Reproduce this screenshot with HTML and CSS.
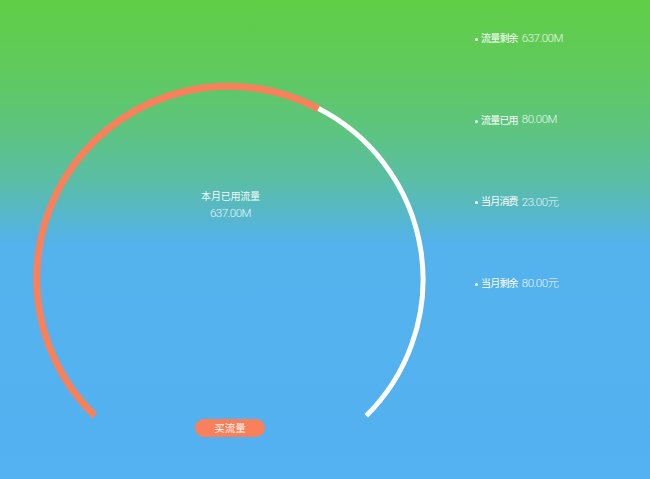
FILE: index.html
```html
<!DOCTYPE html>
<html lang="zh">
<head>
<meta charset="utf-8">
<link rel="stylesheet" href="styles.css">
</head>
<body>
<div class="page">
  <div class="gauge">
    <svg class="gauge-svg" width="460" height="479" viewBox="0 0 460 479">
      <path d="M94.7 415.8 A192 192 0 0 1 318.5 108.6" fill="none" stroke="#f8815c" stroke-width="7"/>
      <path d="M318.5 108.6 A192 192 0 0 1 366.3 415.8" fill="none" stroke="#ffffff" stroke-width="5"/>
    </svg>
    <div class="gauge-text">
      <div class="gauge-title">本月已用流量</div>
      <div class="gauge-value num">637.00M</div>
    </div>
    <div class="buy-btn">买流量</div>
  </div>
  <ul class="stats">
    <li class="stat"><span class="dot"></span><span class="label">流量剩余</span><span class="num">637.00M</span></li>
    <li class="stat"><span class="dot"></span><span class="label">流量已用</span><span class="num">80.00M</span></li>
    <li class="stat"><span class="dot"></span><span class="label">当月消费</span><span class="num">23.00元</span></li>
    <li class="stat"><span class="dot"></span><span class="label">当月剩余</span><span class="num">80.00元</span></li>
  </ul>
</div>
</body>
</html>
```

FILE: styles.css
```css
html, body {
  margin: 0;
  padding: 0;
}
body {
  width: 650px;
  height: 479px;
  overflow: hidden;
  font-family: "Noto Sans CJK SC", "Liberation Sans", sans-serif;
  color: #ffffff;
  background: linear-gradient(to bottom, #61ce46 0%, #60ca5c 14%, #5dc57c 26%, #5abea2 37%, #57b8c6 44%, #54b2ec 51%, #54b1f2 100%);
}
.page {
  display: flex;
  width: 650px;
  height: 479px;
}
.gauge {
  position: relative;
  width: 460px;
  height: 479px;
  flex: none;
}
.gauge-svg {
  display: block;
}
.gauge-text {
  position: absolute;
  left: 130px;
  top: 187px;
  width: 201px;
  text-align: center;
  color: rgba(255,255,255,0.95);
}
.gauge-title {
  font-size: 10px;
  line-height: 17px;
  letter-spacing: -0.2px;
}
.gauge-value {
  line-height: 19px;
}
.num {
  font-family: Roboto, "Noto Sans CJK SC", sans-serif;
  font-weight: 300;
  font-size: 11.5px;
  letter-spacing: -0.5px;
  font-variant-numeric: tabular-nums;
  color: rgba(255,255,255,0.9);
}
.buy-btn {
  position: absolute;
  left: 195px;
  top: 419px;
  width: 70px;
  height: 18px;
  line-height: 18px;
  border-radius: 9px;
  background: #f8815c;
  text-align: center;
  font-size: 10.5px;
  color: rgba(255,255,255,0.95);
}
.stats {
  list-style: none;
  margin: 0;
  padding: 29px 0 0 15px;
  display: flex;
  flex-direction: column;
  gap: 64.6px;
}
.stat {
  display: flex;
  align-items: center;
  height: 17px;
  font-size: 10px;
}
.dot {
  width: 3px;
  height: 3px;
  border-radius: 50%;
  background: #ffffff;
  margin: 4px 3px 0 0;
}
.label {
  letter-spacing: -0.8px;
  margin-right: 4px;
}
```
